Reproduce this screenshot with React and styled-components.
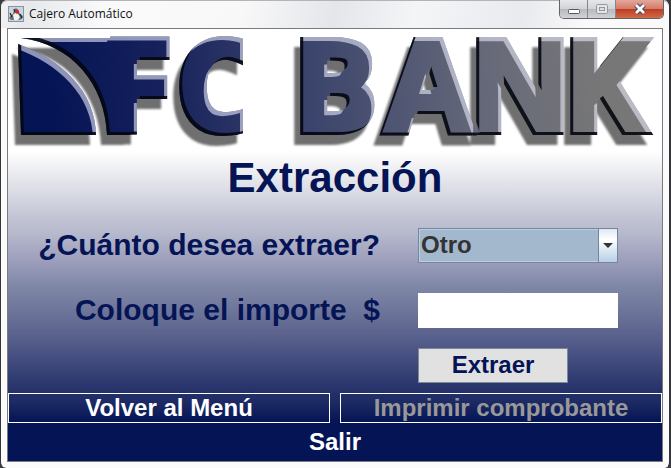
import React, { useState } from "react";
import styled, { createGlobalStyle, css } from "styled-components";

const navy = "#051455";

const GlobalStyle = createGlobalStyle`
  * { box-sizing: border-box; }
  html, body, #root { height: 100%; margin: 0; }
  body { background: #3b3b40; font-family: "Liberation Sans", Arial, sans-serif; }
  button, input, select { font: inherit; margin: 0; }
`;

const Window = styled.div`
  min-height: 100%;
  display: flex;
  flex-direction: column;
  padding: 0 6px 6px;
  border: solid #353539;
  border-width: 0 2px 0 1px;
  border-radius: 7px 7px 6px 6px;
  background: #fbfbfc;
`;

const TitleBar = styled.header`
  display: flex;
  align-items: flex-start;
  height: 28px;
  margin: 0 -6px;
  padding: 0 5px 0 7px;
  border-top: 1px solid #b4b4b8;
  border-radius: 7px 7px 0 0;
  background: linear-gradient(100deg, #f2f2f4 0%, #e6e8eb 4%, #fafafb 16%, #f8f8f9 36%, #e4e6ea 50%, #f4f5f7 62%, #e9eaee 78%, #fafafa 88%);
`;

const TitleIcon = styled.svg`
  width: 16px;
  height: 16px;
  margin-top: 5px;
`;

const WindowTitle = styled.span`
  flex: 1;
  margin: 4px 0 0 5px;
  font: 12px/18px "Open Sans", "Noto Sans", sans-serif;
  color: #111;
`;

const Controls = styled.div`
  display: flex;
  height: 19px;
  margin-top: -1px;
  border: 1px solid #62646b;
  border-top: 0;
  border-radius: 0 0 5px 5px;
  overflow: hidden;
`;

const ControlButton = styled.button`
  display: grid;
  place-items: center;
  width: ${({ $close }) => ($close ? 47 : 28)}px;
  padding: 0;
  border: 0;
  border-right: ${({ $close }) => ($close ? "0" : "1px solid #85878d")};
  background: ${({ $close }) =>
    $close
      ? "linear-gradient(#e3a79b, #d47c69 48%, #bf3c20 50%, #d06a4b)"
      : "linear-gradient(#e6e7e9, #d2d3d6 48%, #b6b8bc 50%, #d2d3d7)"};
`;

const Panel = styled.main`
  flex: 1;
  display: flex;
  flex-direction: column;
  border: 1px solid #7b7b7f;
  color: ${navy};
  font-weight: 700;
  background: linear-gradient(
    #fff 0, #fff 122px, #e4e5eb 152px, #c8cad9 182px, #b5b7cb 206px,
    #989ab9 236px, #8088a7 256px, #6b7298 286px, #535b89 314px,
    #2c386e 354px, #1c2963 374px, ${navy} 393px
  );
`;

const Logo = styled.svg`
  display: block;
  width: 100%;
  height: auto;
  overflow: visible;
`;

const LogoText = styled.text`
  font-family: "Open Sans", "Noto Sans", sans-serif;
  font-size: 125px;
  font-weight: 700;
  stroke: url(#metal);
  stroke-width: 8px;
`;

const Heading = styled.h1`
  margin: 3px 0 0;
  font-size: 42px;
  line-height: 50px;
  text-align: center;
`;

const Form = styled.form`
  display: flex;
  flex-direction: column;
  padding: 25px 44px 0 20px;
`;

const Row = styled.div`
  display: grid;
  grid-template-columns: 1fr 200px;
  column-gap: 38px;
  align-items: center;
  margin-bottom: ${({ $gap }) => $gap}px;
`;

const Label = styled.label`
  padding-bottom: 2px;
  font-size: 30px;
  line-height: 33px;
  text-align: right;
  white-space: pre;
`;

const SelectBox = styled.div`
  position: relative;
  height: 35px;
  border: 1px solid #73869a;
`;

const Select = styled.select`
  appearance: none;
  width: 100%;
  height: 100%;
  padding: 0 22px 2px 1px;
  border: 1px solid #b8cfe5;
  border-radius: 0;
  outline: 0;
  background: #a3b8cc;
  color: #333;
  font-size: 24px;
  line-height: 30px;
`;

const Arrow = styled.span`
  position: absolute;
  inset: 0 0 0 auto;
  display: grid;
  place-items: center;
  width: 19px;
  border-left: 1px solid #73869a;
  background: linear-gradient(#dde8f3, #fff 32%, #e0eaf4 60%, #b8cfe5);
  pointer-events: none;
`;

const AmountInput = styled.input`
  width: 100%;
  height: 35px;
  padding: 0 4px;
  border: 0;
  outline: 0;
  background: #fff;
  color: ${navy};
  font-size: 24px;
`;

const SubmitButton = styled.button`
  grid-column: 2;
  width: 150px;
  height: 35px;
  padding: 0 0 2px;
  border: 1px solid #7a8a99;
  background: #e1e1e1;
  color: ${navy};
  font-size: 24px;
  line-height: 30px;
`;

const Actions = styled.nav`
  display: grid;
  grid-template-columns: 1fr 1fr;
  column-gap: 10px;
`;

const MenuButton = styled.button`
  height: 30px;
  padding: 0;
  border: ${({ $plain }) => ($plain ? "0" : "1px solid #fff")};
  background: transparent;
  color: #fff;
  font-size: 24px;
  line-height: 28px;
  ${({ $plain }) => $plain && css`
    grid-column: 1 / -1;
    height: 38px;
  `}
  &:disabled { color: #999; }
`;

function JavaIcon() {
  return (
    <TitleIcon viewBox="0 0 16 16" aria-hidden="true">
      <rect x=".5" y=".5" width="15" height="15" fill="#c9d5df" stroke="#8195a6" />
      <path d="M1 12L3 9L5 8L6 4L8 2L10 4L12 8L15 10L14 13L11 14H3Z" fill="#6b6e71" />
      <path d="M5 9L7 7L10 8L12 11L10 14H6Z" fill="#f3f4f4" />
      <path d="M2 7L4 11M12 8L14 12M6 3L7 6" stroke="#252525" strokeWidth="1.2" />
      <circle cx="9" cy="5.5" r="2" fill="#d72628" />
    </TitleIcon>
  );
}

function BankLogo() {
  return (
    <Logo viewBox="8 29 654 121" role="img" aria-label="FC BANK">
      <defs>
        <linearGradient id="metal" gradientUnits="userSpaceOnUse" x1="50" y1="110" x2="600" y2="70">
          <stop offset="0" stopColor="#051455" />
          <stop offset=".2" stopColor="#16215c" />
          <stop offset=".48" stopColor="#3c456c" />
          <stop offset=".78" stopColor="#656879" />
          <stop offset="1" stopColor="#777777" />
        </linearGradient>
        <clipPath id="trim">
          <path d="M8 29H243V150H8ZM290 29H662V150H290Z" />
        </clipPath>
        <filter id="bevel" filterUnits="userSpaceOnUse" x="8" y="29" width="654" height="121" colorInterpolationFilters="sRGB">
          <feOffset in="SourceAlpha" dx="-6" dy="10" result="cast" />
          <feGaussianBlur in="cast" stdDeviation="1" result="soft" />
          <feFlood floodColor="#6f6f6f" />
          <feComposite in2="soft" operator="in" result="shadow" />
          <feOffset in="SourceAlpha" dx="-3" dy="4" result="lower" />
          <feFlood floodColor="#e8eafa" floodOpacity=".6" />
          <feComposite in2="lower" operator="out" />
          <feGaussianBlur stdDeviation=".6" />
          <feComposite in2="SourceAlpha" operator="in" result="light" />
          <feOffset in="SourceAlpha" dx="3" dy="-3" result="upper" />
          <feFlood floodColor="#05070f" floodOpacity=".9" />
          <feComposite in2="upper" operator="out" />
          <feGaussianBlur stdDeviation=".6" />
          <feComposite in2="SourceAlpha" operator="in" result="dark" />
          <feMerge>
            <feMergeNode in="shadow" />
            <feMergeNode in="SourceGraphic" />
            <feMergeNode in="light" />
            <feMergeNode in="dark" />
          </feMerge>
        </filter>
      </defs>
      <g fill="url(#metal)" filter="url(#bevel)">
        <path d="M18 44C62 60 95 91 96 135H21Z" />
        <path d="M21 38H130V135H107C105 83 71 44 21 38Z" />
        <g clipPath="url(#trim)">
          <LogoText x="103 176 0 293 385 469 563" y="131">FC BANK</LogoText>
        </g>
      </g>
    </Logo>
  );
}

export default function App() {
  const [amount, setAmount] = useState("");
  return (
    <>
      <GlobalStyle />
      <Window>
        <TitleBar>
          <JavaIcon />
          <WindowTitle>Cajero Automático</WindowTitle>
          <Controls>
            <ControlButton type="button" aria-label="Minimizar">
              <svg width="14" height="16"><rect x="1.5" y="8.5" width="11" height="4" rx="1" fill="#fff" stroke="#515564" /></svg>
            </ControlButton>
            <ControlButton type="button" aria-label="Maximizar" disabled>
              <svg width="14" height="16"><rect x="1.5" y="3.5" width="11" height="9" rx="1" fill="#e4e4e6" stroke="#96989e" /><rect x="4.5" y="6.5" width="5" height="3" fill="#ddd" stroke="#96989e" /></svg>
            </ControlButton>
            <ControlButton type="button" aria-label="Cerrar" $close>
              <svg width="14" height="16"><path d="M3 4L11 12M11 4L3 12" stroke="#4b4d5c" strokeWidth="5" /><path d="M3 4L11 12M11 4L3 12" stroke="#fff" strokeWidth="2.6" /></svg>
            </ControlButton>
          </Controls>
        </TitleBar>
        <Panel>
          <BankLogo />
          <Heading>Extracción</Heading>
          <Form onSubmit={(e) => e.preventDefault()}>
            <Row $gap={30}>
              <Label htmlFor="opcion">¿Cuánto desea extraer?</Label>
              <SelectBox>
                <Select id="opcion" defaultValue="Otro">
                  <option>Otro</option>
                </Select>
                <Arrow>
                  <svg width="10" height="5"><path d="M0 0H10L5 5Z" fill="#333" /></svg>
                </Arrow>
              </SelectBox>
            </Row>
            <Row $gap={20}>
              <Label htmlFor="importe">{"Coloque el importe  $"}</Label>
              <AmountInput id="importe" inputMode="decimal" value={amount} onChange={(e) => setAmount(e.target.value)} />
            </Row>
            <Row $gap={10}>
              <SubmitButton type="submit">Extraer</SubmitButton>
            </Row>
          </Form>
          <Actions>
            <MenuButton type="button">Volver al Menú</MenuButton>
            <MenuButton type="button" disabled>Imprimir comprobante</MenuButton>
            <MenuButton type="button" $plain>Salir</MenuButton>
          </Actions>
        </Panel>
      </Window>
    </>
  );
}
